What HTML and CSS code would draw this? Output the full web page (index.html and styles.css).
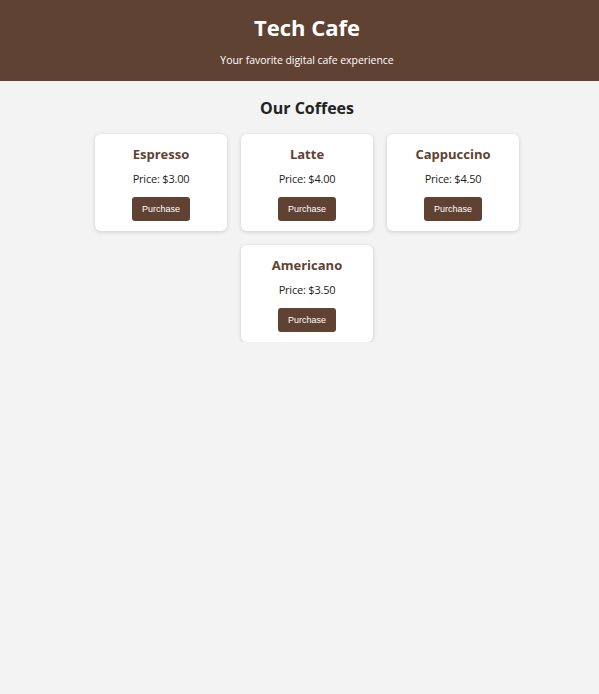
FILE: index.html
```html
<!DOCTYPE html>
<html lang="en">
<head>
    <meta charset="UTF-8">
    <meta name="viewport" content="width=device-width, initial-scale=1.0">
    <title>Tech Cafe</title>
    <link rel="stylesheet" href="styles.css">
</head>
<body>
    <header class="site-header">
        <h1>Tech Cafe</h1>
        <p>Your favorite digital cafe experience</p>
    </header>

    <main class="menu">
        <h2>Our Coffees</h2>
        <div class="coffee-list">
            <div class="coffee-card">
                <h3>Espresso</h3>
                <p class="price">Price: $3.00</p>
                <button type="button">Purchase</button>
            </div>
            <div class="coffee-card">
                <h3>Latte</h3>
                <p class="price">Price: $4.00</p>
                <button type="button">Purchase</button>
            </div>
            <div class="coffee-card">
                <h3>Cappuccino</h3>
                <p class="price">Price: $4.50</p>
                <button type="button">Purchase</button>
            </div>
            <div class="coffee-card">
                <h3>Americano</h3>
                <p class="price">Price: $3.50</p>
                <button type="button">Purchase</button>
            </div>
        </div>
    </main>
</body>
</html>
```

FILE: styles.css
```css
* {
    margin: 0;
    padding: 0;
    box-sizing: border-box;
}

body {
    font-family: 'Open Sans', 'DejaVu Sans', sans-serif;
    background-color: #f3f3f3;
    color: #222222;
}

.site-header {
    background-color: #5f4232;
    color: #ffffff;
    text-align: center;
    height: 81px;
    padding: 14px 0 0 15px;
}

.site-header h1 {
    font-size: 22px;
    line-height: 26px;
    font-weight: bold;
}

.site-header p {
    font-size: 10.5px;
    line-height: 14px;
    letter-spacing: -0.05px;
    margin-top: 13px;
}

.menu {
    padding-left: 15px;
}

.menu h2 {
    text-align: center;
    font-size: 16px;
    line-height: 20px;
    color: #222222;
    margin-top: 17px;
    margin-bottom: 16px;
}

.coffee-list {
    display: flex;
    flex-wrap: wrap;
    justify-content: center;
    gap: 14px;
    max-width: 440px;
    margin: 0 auto;
}

.coffee-card {
    width: 132px;
    background-color: #ffffff;
    border-radius: 6px;
    box-shadow: 0 1px 4px rgba(0, 0, 0, 0.16);
    text-align: center;
    padding: 12px 6px 10px;
}

.coffee-card h3 {
    font-size: 13px;
    line-height: 16px;
    color: #5f4232;
}

.coffee-card .price {
    font-size: 11px;
    line-height: 14px;
    letter-spacing: -0.2px;
    margin-top: 10px;
}

.coffee-card button {
    margin-top: 11px;
    height: 24px;
    padding: 0 10px;
    background-color: #5f4232;
    color: #ffffff;
    border: none;
    border-radius: 3px;
    font-family: 'Liberation Sans', Arial, sans-serif;
    font-size: 9px;
    cursor: pointer;
}
```
